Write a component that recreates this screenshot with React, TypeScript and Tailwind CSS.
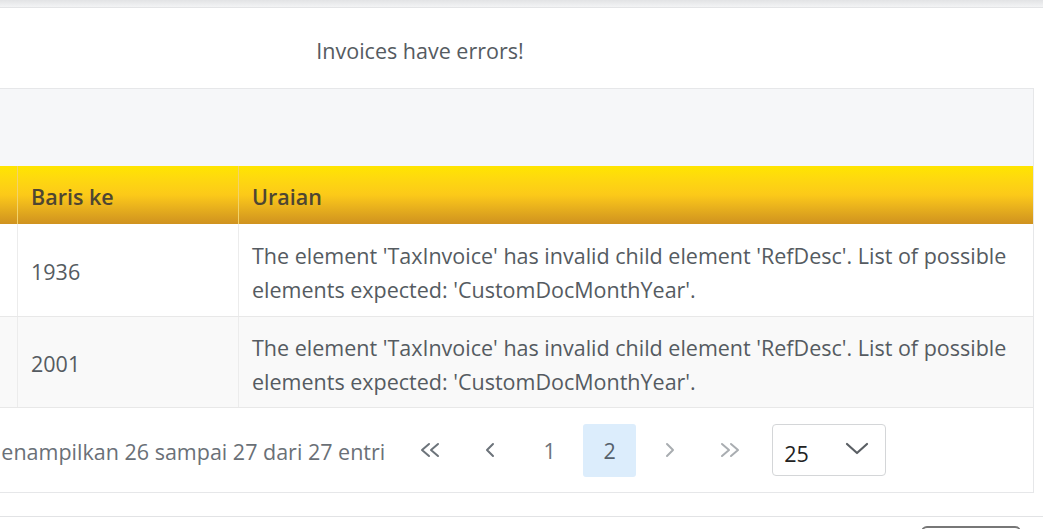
import React from "react";

const rows = [
  { line: "1936", bg: "bg-white" },
  { line: "2001", bg: "bg-[#f9f9f9]" },
];

const msg =
  "The element 'TaxInvoice' has invalid child element 'RefDesc'. List of possible elements expected: 'CustomDocMonthYear'.";

function Chev({ dir, double, color }: { dir: "l" | "r"; double?: boolean; color: string }) {
  const w = double ? 22 : 12;
  const paths =
    dir === "l"
      ? double
        ? ["M10 2 L3 8 L10 14", "M19 2 L12 8 L19 14"]
        : ["M9 2 L3 8 L9 14"]
      : double
      ? ["M3 2 L10 8 L3 14", "M12 2 L19 8 L12 14"]
      : ["M3 2 L9 8 L3 14"];
  return (
    <svg width={w} height="16" viewBox={`0 0 ${w} 16`} fill="none">
      {paths.map((d) => (
        <path key={d} d={d} stroke={color} strokeWidth="2" strokeLinecap="round" strokeLinejoin="round" />
      ))}
    </svg>
  );
}

export default function App() {
  return (
    <div
      className="w-[1043px] h-[529px] overflow-hidden bg-white text-[#555b61]"
      style={{ fontFamily: "'Open Sans', 'Noto Sans', sans-serif" }}
    >
      <div className="h-[8px] bg-gradient-to-b from-[#e2e3e5] to-[#f3f4f5] border-b border-[#e3e4e6]" />
      <div className="ml-[-194px] w-[1228px]">
        <div className="h-[80px] flex items-center justify-center text-[21.5px] pt-[6px]">
          Invoices have errors!
        </div>
        <div className="border border-[#e6e7e9]">
          <div className="h-[77px] bg-[#f6f7f9]" />
          <div className="flex h-[58px] bg-gradient-to-b from-[#ffe500] via-[#fcc919] to-[#cf921f] text-[#4e4632] font-semibold text-[21.5px]">
            <div className="w-[211px] border-r border-[#f3d36a]" />
            <div className="w-[221px] border-r border-[#f3d36a] flex items-center px-[13px] pt-[5px]">
              Baris ke
            </div>
            <div className="flex-1 flex items-center px-[13px] pt-[5px]">Uraian</div>
          </div>
          {rows.map((r, i) => (
            <div
              key={r.line}
              className={`flex ${r.bg} border-b border-[#e8e8e8] ${i === 0 ? "h-[93px]" : "h-[91px]"} text-[21.5px]`}
            >
              <div className="w-[211px] border-r border-[#ececec]" />
              <div className="w-[221px] border-r border-[#ececec] flex items-center px-[13px] pt-[4px]">
                {r.line}
              </div>
              <div className="flex-1 flex items-center pl-[13px] pr-[20px] leading-[34px] pt-[6px]">
                <span className="max-w-[775px]">{msg}</span>
              </div>
            </div>
          ))}
          <div className="h-[84px] flex items-center pl-[175px] text-[21.5px]">
            <span className="text-[#6a7077] pt-[4px]">Menampilkan 26 sampai 27 dari 27 entri</span>
            <div className="flex items-center gap-[7px] ml-[18px]">
              <div className="w-[53px] h-[53px] flex items-center justify-center">
                <Chev dir="l" double color="#6c737a" />
              </div>
              <div className="w-[53px] h-[53px] flex items-center justify-center">
                <Chev dir="l" color="#6c737a" />
              </div>
              <div className="w-[53px] h-[53px] flex items-center justify-center text-[#6c737a] pt-[2px]">1</div>
              <div className="w-[53px] h-[53px] flex items-center justify-center rounded-[3px] bg-[#dcedfc] text-[#56616c] pt-[2px]">2</div>
              <div className="w-[53px] h-[53px] flex items-center justify-center">
                <Chev dir="r" color="#a9adb1" />
              </div>
              <div className="w-[53px] h-[53px] flex items-center justify-center">
                <Chev dir="r" double color="#a9adb1" />
              </div>
            </div>
            <div className="ml-[16px] w-[114px] h-[52px] border border-[#d4d6d8] rounded-[4px] flex items-center pl-[11px] pr-[16px] justify-between">
              <span className="text-[#222] pt-[8px]">25</span>
              <svg width="24" height="14" viewBox="0 0 24 14" fill="none" className="mb-[2px]">
                <path d="M2 2 L12 11 L22 2" stroke="#5a5f64" strokeWidth="2.2" strokeLinecap="round" strokeLinejoin="round" />
              </svg>
            </div>
          </div>
        </div>
      </div>
      <div className="mt-[23px] border-t border-[#e2e3e5] flex justify-end pr-[22px]">
        <div className="mt-[9px] w-[100px] h-[30px] border-2 border-[#777] rounded-[6px]" />
      </div>
    </div>
  );
}
